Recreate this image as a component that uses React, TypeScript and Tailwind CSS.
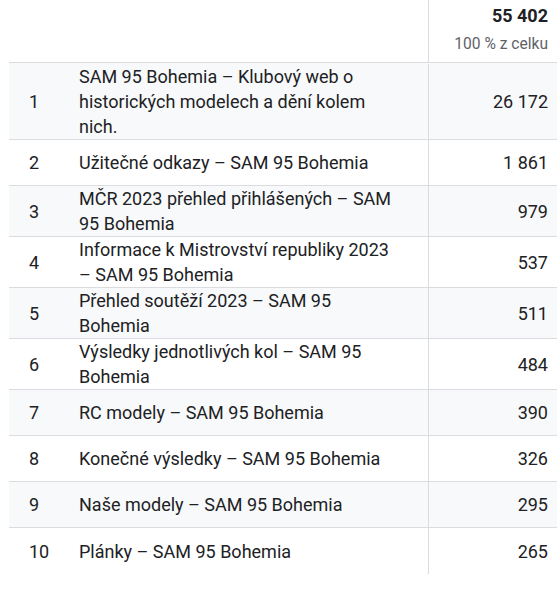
const rows = [
  { rank: 1, title: "SAM 95 Bohemia – Klubový web o historických modelech a dění kolem nich.", value: "26 172" },
  { rank: 2, title: "Užitečné odkazy – SAM 95 Bohemia", value: "1 861" },
  { rank: 3, title: "MČR 2023 přehled přihlášených – SAM 95 Bohemia", value: "979" },
  { rank: 4, title: "Informace k Mistrovství republiky 2023 – SAM 95 Bohemia", value: "537" },
  { rank: 5, title: "Přehled soutěží 2023 – SAM 95 Bohemia", value: "511" },
  { rank: 6, title: "Výsledky jednotlivých kol – SAM 95 Bohemia", value: "484" },
  { rank: 7, title: "RC modely – SAM 95 Bohemia", value: "390" },
  { rank: 8, title: "Konečné výsledky – SAM 95 Bohemia", value: "326" },
  { rank: 9, title: "Naše modely – SAM 95 Bohemia", value: "295" },
  { rank: 10, title: "Plánky – SAM 95 Bohemia", value: "265" },
]

export default function App() {
  return (
    <div className="w-[557px] h-[593px] overflow-hidden bg-white pl-[9px] font-['Roboto',sans-serif] text-[#202124]">
      {/* header */}
      <div className="flex h-[63px] border-b border-[#dadce0]">
        <div className="w-[419px]" />
        <div className="flex-1 border-l border-[#dadce0] pr-[9px] pt-[4px] text-right">
          <div className="text-[18px] leading-[24px] font-bold">55 402</div>
          <div className="mt-[5px] text-[15.6px] leading-[22px] text-[#5f6368]">100 % z celku</div>
        </div>
      </div>

      {rows.map((row, i) => (
        <div
          key={row.rank}
          className={`flex min-h-[46px] text-[18px] leading-[25px] ${
            i < rows.length - 1 ? "border-b border-[#dadce0]" : ""
          } ${i % 2 === 0 ? "bg-[#f8f9fa]" : "bg-white"} ${i === 0 ? "py-[0.5px]" : ""}`}
        >
          <div className="w-[70px] shrink-0 pl-[20px] flex items-center">{row.rank}</div>
          <div className="w-[349px] shrink-0 pr-[28px] flex items-center">{row.title}</div>
          <div className="flex-1 border-l border-[#dadce0] pr-[9px] flex items-center justify-end">
            {row.value}
          </div>
        </div>
      ))}
    </div>
  )
}
